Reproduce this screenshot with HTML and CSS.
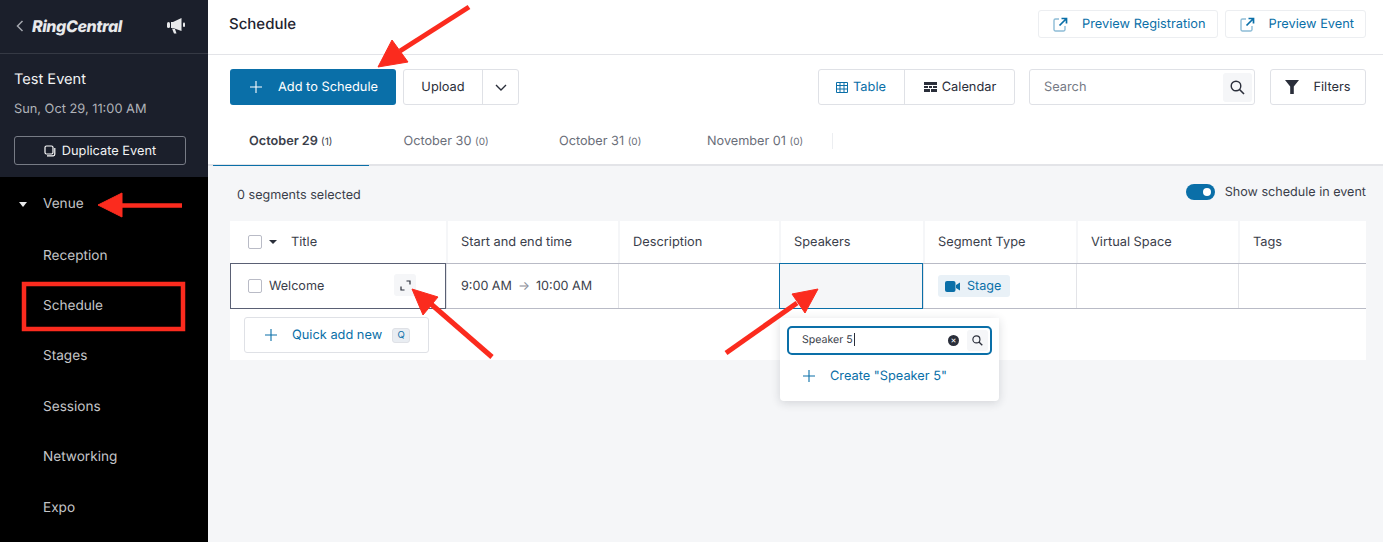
FILE: index.html
```html
<!DOCTYPE html>
<html lang="en">
<head>
    <meta charset="UTF-8">
    <meta name="viewport" content="width=device-width, initial-scale=1.0">
    <title>Schedule</title>
    <link rel="stylesheet" href="styles.css">
</head>
<body>
    <div class="app">
        <aside class="sidebar">
            <div class="brand">
                <svg class="brand-back" width="8" height="12" viewBox="0 0 8 12"><path d="M6.5 1 1.5 6l5 5" fill="none" stroke="#a4a7ae" stroke-width="1.5"/></svg>
                <span class="brand-name">RingCentral</span>
                <svg class="brand-horn" width="20" height="18" viewBox="0 0 20 18"><path d="M7 5 15.5 1v13L7 11H5V5z" fill="#e8e9eb"/><rect x="1" y="5" width="3" height="6" rx="1.5" fill="#e8e9eb"/><path d="M6 11.5 8 16.5h2.5L9 12" fill="#e8e9eb"/><rect x="17" y="5.5" width="2" height="4.5" rx="1" fill="#e8e9eb"/></svg>
            </div>
            <div class="event">
                <h2>Test Event</h2>
                <p>Sun, Oct 29, 11:00 AM</p>
                <button class="dup-btn">
                    <svg width="12" height="12" viewBox="0 0 12 12"><rect x="1" y="1" width="8" height="8" rx="1.5" fill="none" stroke="#fff" stroke-width="1.2"/><path d="M3 10.8h6.3a1.5 1.5 0 0 0 1.5-1.5V3" fill="none" stroke="#fff" stroke-width="1.2"/></svg>
                    <span class="dup-label">Duplicate Event</span>
                </button>
            </div>
            <nav class="nav">
                <div class="nav-parent"><span class="caret-white"></span>Venue</div>
                <a>Reception</a>
                <a>Schedule</a>
                <a>Stages</a>
                <a>Sessions</a>
                <a>Networking</a>
                <a>Expo</a>
            </nav>
        </aside>

        <main class="main">
            <header class="topbar">
                <h1>Schedule</h1>
                <div class="top-actions">
                    <button class="preview-btn">
                        <svg width="15" height="15" viewBox="0 0 15 15"><path d="M6 2H2.5A1.5 1.5 0 0 0 1 3.5v9A1.5 1.5 0 0 0 2.5 14h8a1.5 1.5 0 0 0 1.5-1.5V9" fill="none" stroke="#8dbcd6" stroke-width="1.4"/><path d="M6.5 8.500 13 2M8.500 1.5H13.5V6.5" fill="none" stroke="#0a6fa8" stroke-width="1.7"/></svg>
                        Preview Registration
                    </button>
                    <button class="preview-btn">
                        <svg width="15" height="15" viewBox="0 0 15 15"><path d="M6 2H2.5A1.5 1.5 0 0 0 1 3.5v9A1.5 1.5 0 0 0 2.5 14h8a1.5 1.5 0 0 0 1.5-1.5V9" fill="none" stroke="#8dbcd6" stroke-width="1.4"/><path d="M6.5 8.500 13 2M8.500 1.5H13.5V6.5" fill="none" stroke="#0a6fa8" stroke-width="1.7"/></svg>
                        Preview Event
                    </button>
                </div>
            </header>

            <div class="toolbar">
                <button class="add-btn">
                    <svg width="12" height="12" viewBox="0 0 12 12"><path d="M6 0v12M0 6h12" stroke="#fff" stroke-width="1.1"/></svg>
                    Add to Schedule
                </button>
                <div class="upload">
                    <span class="upload-label">Upload</span>
                    <span class="upload-more">
                        <svg width="12" height="7" viewBox="0 0 12 7"><path d="m1 1 5 5 5-5" fill="none" stroke="#2a2e3a" stroke-width="1.4"/></svg>
                    </span>
                </div>
                <div class="spacer"></div>
                <div class="view-switch">
                    <span class="view-item active">
                        <svg width="12" height="11" viewBox="0 0 12 11"><path d="M.5.5h11v10H.5zM.5 3.5h11M.5 7h11M4 .5v10M8 .5v10" fill="none" stroke="#0a6fa8"/></svg>
                        Table
                    </span>
                    <span class="view-item calendar">
                        <svg width="13" height="10" viewBox="0 0 13 10"><path d="M0 0h13v3H0zM0 4h4v2H0zM5 4h3v2H5zM9 4h4v2H9zM0 7h6v3H0zM7 7h6v3H7z" fill="#2a2e3a"/></svg>
                        Calendar
                    </span>
                </div>
                <div class="search">
                    <span class="search-text">Search</span>
                    <span class="search-icon">
                        <svg width="15" height="15" viewBox="0 0 15 15"><circle cx="6" cy="6" r="4.8" fill="none" stroke="#2a2e3a" stroke-width="1.4"/><path d="m9.5 9.5 4.5 4.5" stroke="#2a2e3a" stroke-width="1.6"/></svg>
                    </span>
                </div>
                <button class="filters-btn">
                    <svg width="14" height="14" viewBox="0 0 14 14"><path d="M0 0h14L8.8 6.5V14H5.2V6.5z" fill="#2a2e3a"/></svg>
                    Filters
                </button>
            </div>

            <div class="tabs">
                <span class="tab active">October 29 <small>(1)</small></span>
                <span class="tab">October 30 <small>(0)</small></span>
                <span class="tab">October 31 <small>(0)</small></span>
                <span class="tab tab-last">November 01 <small>(0)</small></span>
            </div>

            <section class="content">
                <div class="status-row">
                    <span>0 segments selected</span>
                    <label class="show-toggle"><span class="switch"></span>Show schedule in event</label>
                </div>
                <div class="table">
                    <div class="row head">
                        <div class="cell title-cell"><span class="check"></span><span class="caret-dark"></span><span class="title-label">Title</span></div>
                        <div class="cell">Start and end time</div>
                        <div class="cell">Description</div>
                        <div class="cell">Speakers</div>
                        <div class="cell">Segment Type</div>
                        <div class="cell">Virtual Space</div>
                        <div class="cell">Tags</div>
                    </div>
                    <div class="row body">
                        <div class="cell title-cell selected">
                            <span class="check"></span>
                            <span class="welcome">Welcome</span>
                            <span class="expand">
                                <svg width="11" height="11" viewBox="0 0 11 11"><path d="M6.5 1H10v3.5M1 6.5V10h3.5" fill="none" stroke="#2a2e3a" stroke-width="1.2"/></svg>
                            </span>
                        </div>
                        <div class="cell">9:00 AM <span class="time-arrow">&rarr;</span> 10:00 AM</div>
                        <div class="cell"></div>
                        <div class="cell editing"></div>
                        <div class="cell">
                            <span class="tag">
                                <svg width="15" height="11" viewBox="0 0 15 11"><rect width="10.5" height="11" rx="2" fill="#0a6fa8"/><path d="m11 4 4-2.5v8L11 7z" fill="#0a6fa8"/></svg>
                                Stage
                            </span>
                        </div>
                        <div class="cell"></div>
                        <div class="cell"></div>
                    </div>
                    <div class="quick-row">
                        <button class="quick-btn">
                            <svg width="12" height="12" viewBox="0 0 12 12"><path d="M6 0v12M0 6h12" stroke="#0a6fa8" stroke-width="1.1"/></svg>
                            <span class="quick-label">Quick add new</span>
                            <kbd>Q</kbd>
                        </button>
                    </div>
                </div>
            </section>
        </main>
    </div>

    <div class="popover">
        <div class="pop-search">
            <span class="pop-text"><span class="pop-value">Speaker 5</span></span>
            <span class="pop-clear">&times;</span>
            <span class="pop-icon">
                <svg width="11" height="11" viewBox="0 0 15 15"><circle cx="6" cy="6" r="4.8" fill="none" stroke="#2a2e3a" stroke-width="1.6"/><path d="m9.5 9.5 4.5 4.5" stroke="#2a2e3a" stroke-width="1.8"/></svg>
            </span>
        </div>
        <div class="pop-create">
            <svg width="12" height="12" viewBox="0 0 12 12"><path d="M6 0v12M0 6h12" stroke="#0a6fa8" stroke-width="1.1"/></svg>
            <span class="pop-create-label">Create "Speaker 5"</span>
        </div>
    </div>

    <!-- annotations drawn on top of the screenshot -->
    <svg class="notes" width="1383" height="542" viewBox="0 0 1383 542">
        <g fill="#fb2b1e" stroke="#fb2b1e">
            <path d="M469 7 400 51" stroke-width="5"/>
            <path d="M378 67 392 40 408 62z"/>
            <path d="M182 205.5H120" stroke-width="4.5"/>
            <path d="M98 205 122 193V217z"/>
            <path d="M492 357 431 304" stroke-width="5"/>
            <path d="M412 289 438 297 423 315z"/>
            <path d="M726 353 797 303" stroke-width="5"/>
            <path d="M818 289 805 313 792 294z"/>
        </g>
        <rect x="24" y="284" width="159" height="45" fill="none" stroke="#fb2b1e" stroke-width="4.5"/>
    </svg>
</body>
</html>
```

FILE: styles.css
```css
* {
    margin: 0;
    padding: 0;
    box-sizing: border-box;
    font-family: 'Inter', 'Liberation Sans', sans-serif;
    text-rendering: geometricPrecision;
}

body {
    background: #fff;
    color: #2a2e3a;
    width: 1383px;
    height: 542px;
    overflow: hidden;
    position: relative;
}

button {
    background: #fff;
    cursor: pointer;
}

svg {
    flex: none;
    display: block;
}

.app {
    display: flex;
    height: 542px;
}

/* sidebar */
.sidebar {
    width: 208px;
    flex: none;
    background: #000;
    display: flex;
    flex-direction: column;
}

.brand {
    height: 54px;
    background: #1b1f2b;
    border-bottom: 1px solid #353944;
    display: flex;
    align-items: center;
    padding: 0 22px 2px 16px;
}

.brand-name {
    margin-left: 8px;
    flex: 1;
    color: #e8e9eb;
    font-size: 16px;
    font-weight: 800;
    font-style: italic;
    letter-spacing: -0.4px;
}

.event {
    height: 123px;
    background: #1b1f2b;
    padding: 16px 14px 0;
}

.event h2 {
    color: #f2f3f4;
    font-size: 14.6px;
    font-weight: 400;
    line-height: 18px;
}

.event p {
    color: #b0b3b9;
    font-size: 12.8px;
    line-height: 16px;
    margin-top: 14px;
}

.dup-btn {
    width: 172px;
    height: 29px;
    margin-top: 18px;
    background: transparent;
    color: #f2f3f4;
    border: 1px solid #777b85;
    border-radius: 3px;
    font-size: 12.8px;
    display: flex;
    align-items: center;
    justify-content: center;
    gap: 6px;
}

.dup-label {
    position: relative;
    top: 1px;
}

.nav {
    display: flex;
    flex-direction: column;
    padding-top: 1px;
}

.nav a,
.nav-parent {
    height: 50.4px;
    display: flex;
    align-items: center;
    padding-left: 43px;
    color: #c4c5c8;
    font-size: 13.6px;
}

.nav a {
    padding-top: 4px;
}

.nav-parent {
    position: relative;
    padding-top: 2px;
}

.caret-white {
    position: absolute;
    left: 19px;
    top: 24px;
    border-left: 4.5px solid transparent;
    border-right: 4.5px solid transparent;
    border-top: 5px solid #e8e9eb;
}

/* main column */
.main {
    flex: 1;
    min-width: 0;
    display: flex;
    flex-direction: column;
}

.topbar {
    height: 55px;
    flex: none;
    border-bottom: 1px solid #e3e4e8;
    display: flex;
    align-items: center;
    justify-content: space-between;
    padding: 0 17px 6px 21px;
}

.topbar h1 {
    font-size: 15px;
    font-weight: 500;
    color: #1f2330;
    margin-top: -1px;
}

.top-actions {
    display: flex;
    gap: 7px;
}

.preview-btn {
    height: 28px;
    border: 1px solid #eceef1;
    border-radius: 3px;
    color: #0a6fa8;
    font-size: 12.8px;
    display: flex;
    align-items: center;
    gap: 14px;
    padding: 0 11px 0 14px;
}

.toolbar {
    height: 50px;
    flex: none;
    display: flex;
    align-items: flex-start;
    padding: 14px 17px 0 22px;
    font-size: 12.8px;
}

.add-btn {
    width: 166px;
    height: 36px;
    background: #0a6fa8;
    border: none;
    border-radius: 3px;
    color: #fff;
    font-size: 12.8px;
    display: flex;
    align-items: center;
    gap: 16px;
    padding-left: 20px;
}

.upload {
    margin-left: 7px;
    width: 116px;
    height: 36px;
    border: 1px solid #dfe1e6;
    border-radius: 3px;
    display: flex;
    align-items: center;
}

.upload-label {
    width: 78px;
    text-align: center;
}

.upload-more {
    flex: 1;
    height: 100%;
    border-left: 1px solid #dfe1e6;
    display: flex;
    align-items: center;
    justify-content: center;
}

.spacer {
    flex: 1;
}

.view-switch {
    width: 197px;
    height: 36px;
    border: 1px solid #dfe1e6;
    border-radius: 3px;
    display: flex;
}

.view-item {
    display: flex;
    align-items: center;
    justify-content: center;
    gap: 5px;
    flex: 1;
}

.view-item.active {
    flex: none;
    width: 86px;
    color: #0a6fa8;
    border-right: 1px solid #dfe1e6;
    padding-right: 1px;
}

.view-item.calendar {
    padding-left: 1px;
}

.search {
    margin-left: 14px;
    width: 226px;
    height: 36px;
    border: 1px solid #dfe1e6;
    border-radius: 3px;
    display: flex;
    align-items: center;
    justify-content: space-between;
    padding: 0 2px 0 14px;
}

.search-text {
    color: #767a85;
}

.search-icon {
    width: 29px;
    height: 29px;
    background: #f5f6f8;
    border-radius: 3px;
    display: flex;
    align-items: center;
    justify-content: center;
}

.filters-btn {
    margin-left: 15px;
    width: 96px;
    height: 36px;
    border: 1px solid #dfe1e6;
    border-radius: 3px;
    color: #2a2e3a;
    font-size: 12.8px;
    display: flex;
    align-items: center;
    justify-content: center;
    gap: 14px;
}

.tabs {
    height: 61px;
    flex: none;
    display: flex;
    align-items: stretch;
    padding: 17px 0 0 5px;
    border-bottom: 2px solid #e3e4e8;
}

.tab {
    width: 155.5px;
    margin-bottom: -2px;
    padding: 12px 0 0 35px;
    color: #6a6e79;
    font-size: 12.7px;
}

.tab small {
    font-size: 10px;
}

.tab.active {
    padding-left: 36px;
    color: #3a3e4a;
    font-weight: 600;
    border-bottom: 1px solid #0a6fa8;
}

.tab.active small {
    font-weight: 400;
}

.tab-last {
    width: 153px;
    padding-left: 27.5px;
    position: relative;
}

.tab-last::after {
    content: "";
    position: absolute;
    right: 0;
    top: 11px;
    height: 16px;
    border-right: 1px solid #eceef1;
}

/* table area */
.content {
    flex: 1;
    background: #f5f6f8;
    padding: 0 17px 0 22px;
}

.status-row {
    height: 55px;
    display: flex;
    align-items: center;
    justify-content: space-between;
    padding: 3px 0 0 7px;
    font-size: 12.6px;
    color: #3a3e4a;
}

.show-toggle {
    display: flex;
    align-items: center;
    gap: 10px;
    margin-top: -6px;
}

.switch {
    width: 29px;
    height: 16px;
    background: #0a6fa8;
    border-radius: 8px;
    position: relative;
}

.switch::after {
    content: "";
    position: absolute;
    right: 4px;
    top: 4px;
    width: 8px;
    height: 8px;
    border-radius: 50%;
    background: #fff;
}

.table {
    background: #fff;
    font-size: 12.8px;
}

.row {
    display: grid;
    grid-template-columns: 216px 172px 161px 144px 153px 162px 128px;
}

.cell {
    display: flex;
    align-items: center;
    padding-left: 14px;
    color: #3a3e4a;
    min-width: 0;
    border-left: 1px solid #e3e4e8;
}

.head {
    height: 43px;
    border-bottom: 1px solid #b9bbc6;
}

.head .cell {
    border-left: 2px solid #f5f6f8;
    padding-left: 13px;
}

.head .title-cell,
.body .title-cell {
    border-left: none;
    padding-left: 18px;
}

.body {
    height: 45px;
    font-size: 12.6px;
    border-bottom: 1px solid #b9bbc6;
}

.check {
    width: 14px;
    height: 14px;
    flex: none;
    background: #fff;
    border: 1px solid #b9bbc6;
    border-radius: 2px;
}

.caret-dark {
    margin-left: 7px;
    border-left: 4px solid transparent;
    border-right: 4px solid transparent;
    border-top: 4px solid #2a2e3a;
}

.title-label {
    margin-left: 14px;
}

.body .selected {
    border: 1px solid #5a6074;
    margin: -1px 0;
    padding-left: 17px;
    position: relative;
}

.welcome {
    margin-left: 7px;
    flex: 1;
}

.expand {
    position: absolute;
    left: 163px;
    top: 10px;
    width: 22px;
    height: 22px;
    background: #f5f6f8;
    border-radius: 3px;
    display: flex;
    align-items: center;
    justify-content: center;
}

.time-arrow {
    color: #8a8d97;
    margin: 0 6px;
}

.body .editing {
    background: #f5f6f8;
    border: 1px solid #0a6fa8;
    margin-top: -1px;
    margin-bottom: -1px;
}

.tag {
    height: 22px;
    padding: 0 9px 0 7px;
    display: flex;
    align-items: center;
    gap: 7px;
    background: #e9f1f7;
    border-radius: 3px;
    color: #0a6fa8;
}

.quick-row {
    height: 51px;
    padding: 8px 0 0 14px;
}

.quick-btn {
    width: 185px;
    height: 36px;
    border: 1px solid #dfe1e6;
    border-radius: 3px;
    display: flex;
    align-items: center;
    padding-left: 20px;
    font-size: 12.8px;
    color: #0a6fa8;
}

.quick-label {
    margin-left: 15px;
}

kbd {
    margin-left: 10px;
    width: 18px;
    height: 15px;
    font-size: 9.5px;
    background: #e9edf2;
    border: 1px solid #dfe1e6;
    border-radius: 3px;
    display: flex;
    align-items: center;
    justify-content: center;
}

/* speaker popover */
.popover {
    position: absolute;
    left: 780px;
    top: 318px;
    width: 219px;
    height: 83px;
    background: #fff;
    border-radius: 0 0 4px 4px;
    box-shadow: 0 2px 10px rgba(30, 35, 50, 0.16);
    padding: 8px 7px 0;
}

.pop-search {
    height: 29px;
    border: 2px solid #0a6fa8;
    border-radius: 5px;
    display: flex;
    align-items: center;
    padding: 0 2px 1px 13px;
    font-size: 10.6px;
    color: #3a3e4a;
}

.pop-text {
    flex: 1;
}

.pop-value {
    padding-right: 1px;
    border-right: 1px solid #2a2e3a;
    position: relative;
    top: -1px;
}

.pop-clear {
    width: 11px;
    height: 11px;
    border-radius: 50%;
    background: #2a2e3a;
    color: #fff;
    font-size: 9px;
    line-height: 11px;
    text-align: center;
    margin-right: 8px;
}

.pop-icon {
    width: 21px;
    height: 21px;
    background: #f5f6f8;
    border-radius: 3px;
    display: flex;
    align-items: center;
    justify-content: center;
}

.pop-create {
    display: flex;
    align-items: center;
    gap: 15px;
    padding: 13px 0 0 16px;
    font-size: 12.8px;
    color: #0a6fa8;
}

.pop-create-label {
    position: relative;
    top: 1px;
}

.notes {
    position: absolute;
    left: 0;
    top: 0;
    pointer-events: none;
}
```
